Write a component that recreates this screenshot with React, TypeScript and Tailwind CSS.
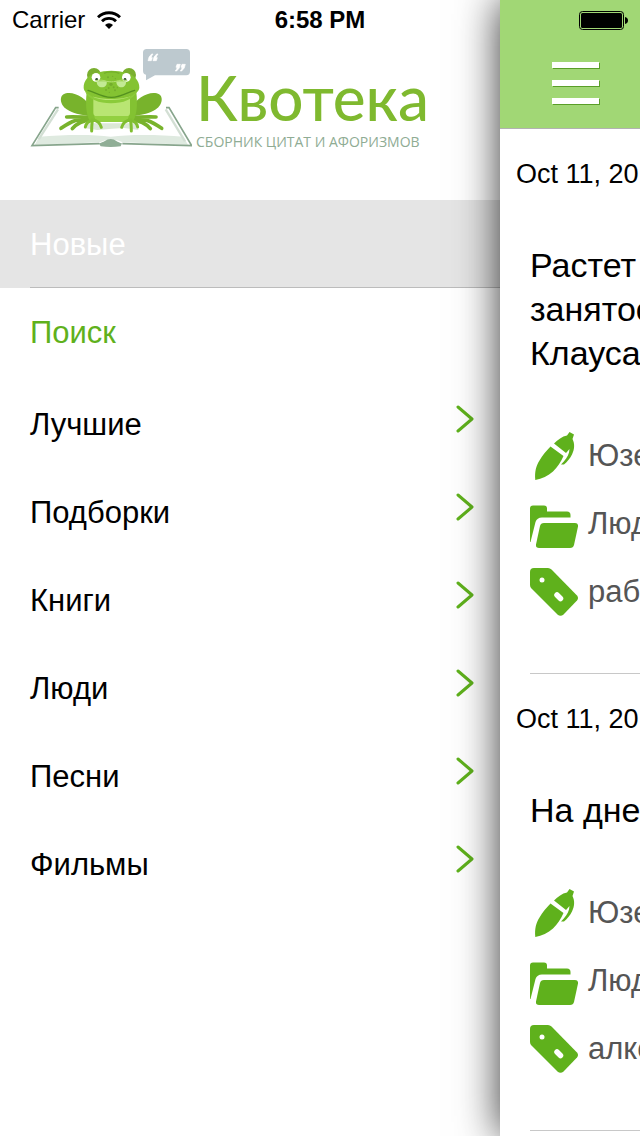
import type { ReactNode } from "react";

const sections = ["Лучшие", "Подборки", "Книги", "Люди", "Песни", "Фильмы"];

const quotes = [
  {
    date: "Oct 11, 2014",
    lines: ["Растет", "занятость", "Клауса"],
    author: "Юзеф",
    category: "Люди",
    tag: "работа",
  },
  {
    date: "Oct 11, 2014",
    lines: ["На дне"],
    author: "Юзеф",
    category: "Люди",
    tag: "алкоголь",
  },
];

function WifiIcon() {
  return (
    <svg viewBox="0 0 24 18" className="h-[18px] w-6" fill="none" stroke="#000" strokeWidth="2.9">
      <path d="M1 6.2a16 16 0 0 1 22 0" />
      <path d="M5 10.2a10.2 10.2 0 0 1 14 0" />
      <path d="M12 18l-4-4.1a5.8 5.8 0 0 1 8 0z" fill="#000" stroke="none" />
    </svg>
  );
}

function BatteryIcon() {
  return (
    <svg viewBox="0 0 49 19" className="h-[19px] w-[49px]">
      <rect x="0.5" y="0.5" width="44" height="18" rx="3" fill="none" stroke="#000" />
      <rect x="2" y="2" width="41" height="15" rx="1.5" />
      <path d="M46 6c2 .4 3 1.600 3 3.500s-1 3.100-3 3.500z" />
    </svg>
  );
}

function FrogLogo() {
  return (
    <svg viewBox="30 24 486 300" className="h-[100px] w-[162px] shrink-0">
      {/* open book */}
      <path d="M114 206L46 312l194-6c18-8 50-8 66 0l200 6-62-106z" fill="#fff" />
      <path d="M58 290c70-6 160-8 214 0 60-8 150-6 218 0l14 24-196-7c-20-10-50-10-68 0L44 315z" fill="#dfeae0" />
      <path d="M114 208L56 298" stroke="#d3dfd4" strokeWidth="7" />
      <path d="M437 208l58 96" stroke="#d3dfd4" strokeWidth="7" />
      <path d="M116 203h-9L36 317l202-6 M438 203h9l68 114-208-6" fill="none" stroke="#87a58c" strokeWidth="5" />
      <path d="M236 310c16-2 22-13 36-13s20 11 34 13l-4 9c-20 3-40 3-60 0z" fill="#90ae96" />
      <path d="M206 250h136l14 20-44-6-36 2-44 4-40-6z" fill="#dce8d6" />
      {/* back legs */}
      <path d="M216 206c-18-32-52-52-78-46-23 5-18 35 2 48 20 14 43 16 54 18l26 5z" fill="#78b32c" />
      <path d="M332 206c18-32 52-52 78-46 23 5 18 35-2 48-20 14-43 16-54 18l-26 5z" fill="#78b32c" />
      <g fill="none" stroke="#78b32c" strokeWidth="11" strokeLinecap="round">
        <path d="M214 232c-24 0-38-2-74-1M208 236c-32-1-52 6-85 29M214 238c-30 4-44 12-57 28" />
        <path d="M334 232c24 0 38-2 74-1M340 236c32-1 52 6 85 29M334 238c30 4 44 12 57 28" />
      </g>
      {/* body */}
      <path d="M200 156c-3 32-4 64 10 88h129c14-24 13-56 10-88z" fill="#83c232" />
      <path d="M222 226h105l-6 20h-93z" fill="#93d041" />
      <rect x="220" y="158" width="110" height="70" rx="10" fill="#b9e573" />
      <g fill="none" stroke="#80be30" strokeWidth="9" strokeLinecap="round">
        <path d="M218 241c-12 2-19 7-22 20M218 241c-3 8-3 20-3 32M216 240c16 1 25 9 28 22" />
        <path d="M331 241c12 2 19 7 22 20M331 241c3 8 3 20 3 32M333 240c-16 1-25 9-28 22" />
      </g>
      {/* head */}
      <circle cx="222" cy="105" r="21" fill="#7aaf2f" />
      <circle cx="327" cy="105" r="21" fill="#7aaf2f" />
      <path d="M232 98c20-8 64-8 84 0 26 4 43 25 42 45-2 20-36 34-84 34s-82-14-83-34c-1-20 15-41 41-45z" fill="#84c332" />
      <path d="M195 154c26 24 53 27 78 26 35 0 62-7 78-26-10 25-43 36-78 36s-68-11-78-36z" fill="#8bcb3a" />
      <path d="M252 100c10-6 34-6 46 0" fill="none" stroke="#74ae2b" strokeWidth="4" />
      <circle cx="228" cy="112" r="13" fill="#fff" />
      <circle cx="319" cy="112" r="13" fill="#fff" />
      <circle cx="230" cy="118" r="4" fill="#314a2f" />
      <circle cx="315" cy="118" r="4" fill="#314a2f" />
      <path d="M230 124h30c2 12-5 18-14 18s-16-6-16-18zM289 124h29c1 12-6 18-14 18s-15-6-15-18z" fill="#c3ea94" />
      <path d="M226 122c10-3 24-2 34 2 10 2 18 2 28 0 10-4 24-5 34-2" fill="none" stroke="#b3df72" strokeWidth="3" />
      <g fill="#74ad2c">
        <circle cx="264" cy="112" r="3" />
        <circle cx="278" cy="109" r="2" />
        <circle cx="286" cy="116" r="2" />
        <circle cx="258" cy="150" r="3" />
        <circle cx="268" cy="157" r="2" />
        <circle cx="285" cy="151" r="3" />
        <circle cx="292" cy="143" r="2" />
        <circle cx="273" cy="133" r="5" />
        <circle cx="266" cy="144" r="3" />
        <circle cx="281" cy="142" r="3" />
      </g>
      <path d="M204 151c20 4 38 21 70 21s50-17 70-21" fill="none" stroke="#54911f" strokeWidth="4" strokeLinecap="round" />
      {/* speech bubble */}
      <path d="M380 27h119q11 0 11 11v56q0 12-11 12h-94l-27 15v-17q-9-2-9-12V38q0-11 11-11z" fill="#bdc9cf" />
      <path
        d="M395 42q-10 8-11 20h10l3-9h-4q2-6 6-11zM410 42q-10 8-11 20h10l3-9h-4q2-6 6-11zM470 93q10-8 11-20h-10l-3 9h4q-2 6-6 11zM485 93q10-8 11-20h-10l-3 9h4q-2 6-6 11z"
        fill="#fff"
        stroke="#fff"
        strokeWidth="2"
      />
    </svg>
  );
}

function Chevron() {
  return (
    <svg viewBox="0 0 18 28" className="mb-3 h-7 w-[18px]" fill="none" stroke="#5fb11c" strokeWidth="3" strokeLinecap="round" strokeLinejoin="round">
      <path d="M2 2l14 12L2 26" />
    </svg>
  );
}

function PenIcon() {
  return (
    <svg viewBox="0 0 48 48" className="size-12 shrink-0" fill="#5fb11c">
      <path d="M5.300 48C4.500 40 6 34 9.500 28.500C12.500 23.500 16 19 20.500 14.500L33.500 24C31 30 27.500 35 23 39.500C18 44 12 46.500 5.300 48z" />
      <path d="M24 11.500C28 7.500 32 4.500 37 3.500L39.500 0l4.500 2.500-1.500 4.500c2.500 5 2 10.500-.5 15.500-2 4-5 7.500-8 10h-3c4-4 7-8 8-12l.5-3.500-3.500 4z" />
    </svg>
  );
}

function FolderIcon() {
  return (
    <svg viewBox="0 0 48 48" className="size-12 shrink-0" fill="#5fb11c">
      <path d="M3 5.500h11q3 0 3 3v3h20q3.500 0 3.500 3.500v2.500H12Q7 17.500 5.500 22L.5 42H0V8.500q0-3 3-3z" />
      <path d="M14 23h31q3.500 0 3 3.500l-4 18.500q-.7 3-4 3H9q-3.500 0-3-3.500L10 26q.7-3 4-3z" />
    </svg>
  );
}

function TagIcon() {
  return (
    <svg viewBox="0 0 48 48" className="size-12 shrink-0" fill="#5fb11c">
      <path d="M4 0h14q2 0 3.500 1.500l25.500 26q2 2.500 0 5L33.500 46.500q-3 2.500-6 0L1.500 20.500Q0 19 0 17V4q0-4 4-4z" />
      <circle cx="12" cy="12" r="2.500" fill="#fff" />
      <path d="M27 27l3.500 3.500" stroke="#fff" strokeWidth="5.500" strokeLinecap="round" />
    </svg>
  );
}

function Meta({ icon, children }: { icon: ReactNode; children: ReactNode }) {
  return (
    <li className="flex h-[68px] items-center gap-[10px]">
      {icon}
      <a href="#" className="text-[31px] leading-10 text-[#555]">
        {children}
      </a>
    </li>
  );
}

function Drawer() {
  return (
    <aside className="flex-1">
      <header className="flex h-[200px] items-start pt-12 pl-[30px]">
        <FrogLogo />
        <div className="flex flex-col pl-1 whitespace-nowrap">
          <span className="pt-3 font-['Lato',sans-serif] text-[62px] leading-[74px] font-medium text-[#7fb92f]">Квотека</span>
          <span className="font-['Open_Sans',sans-serif] text-[14px] leading-4 text-[#8fac94]">СБОРНИК ЦИТАТ И АФОРИЗМОВ</span>
        </div>
      </header>
      <nav className="text-[31px] leading-9">
        <a href="#" className="flex h-[88px] flex-col bg-[#e5e5e5] pl-[30px] text-white">
          <span className="flex flex-1 items-center border-b border-[#bcbcbc] pt-[2px]">Новые</span>
        </a>
        <a href="#" className="mb-1 flex h-[88px] items-center pt-[2px] pl-[30px] text-[#5fb11c]">
          Поиск
        </a>
        {sections.map((name) => (
          <a key={name} href="#" className="flex h-[88px] items-center justify-between pt-[2px] pr-[26px] pl-[30px] text-black">
            {name}
            <Chevron />
          </a>
        ))}
      </nav>
    </aside>
  );
}

function Feed() {
  return (
    <main className="relative w-[140px] shrink-0 bg-white shadow-[0_0_40px_rgba(0,0,0,0.8)]">
      <div className="overflow-hidden whitespace-nowrap">
        <div className="h-[129px] border-b border-[#b2b2b2] bg-[#a1d775] pt-[62px] pl-[52px]">
          <button aria-label="Меню" className="flex flex-col gap-3">
            {[1, 2, 3].map((i) => (
              <span key={i} className="h-[6px] w-[47px] bg-white shadow-[1px_1px_0_#5a9e28]" />
            ))}
          </button>
        </div>
        {quotes.map((quote) => (
          <article key={quote.tag} className="pt-[29px]">
            <time className="block pl-4 text-[27px] leading-8">{quote.date}</time>
            <div className="ml-[30px] border-b border-[#c8c8c8] pt-[53px] pb-[47px]">
              <p className="text-[34px] leading-[44px]">
                {quote.lines.map((line) => (
                  <span key={line} className="block">
                    {line}
                  </span>
                ))}
              </p>
              <ul className="pt-[47px]">
                <Meta icon={<PenIcon />}>{quote.author}</Meta>
                <Meta icon={<FolderIcon />}>{quote.category}</Meta>
                <Meta icon={<TagIcon />}>{quote.tag}</Meta>
              </ul>
            </div>
          </article>
        ))}
      </div>
    </main>
  );
}

export default function App() {
  return (
    <div className="relative min-h-screen overflow-hidden bg-white font-['Liberation_Sans',Arial,sans-serif] text-black">
      <div className="flex min-h-screen">
        <Drawer />
        <Feed />
      </div>
      <div className="absolute inset-x-0 top-0 grid h-10 grid-cols-3 items-center px-3 text-2xl leading-10">
        <span className="flex items-center gap-3">
          Carrier
          <WifiIcon />
        </span>
        <span className="text-center font-bold">6:58 PM</span>
        <span className="flex justify-end">
          <BatteryIcon />
        </span>
      </div>
    </div>
  );
}
